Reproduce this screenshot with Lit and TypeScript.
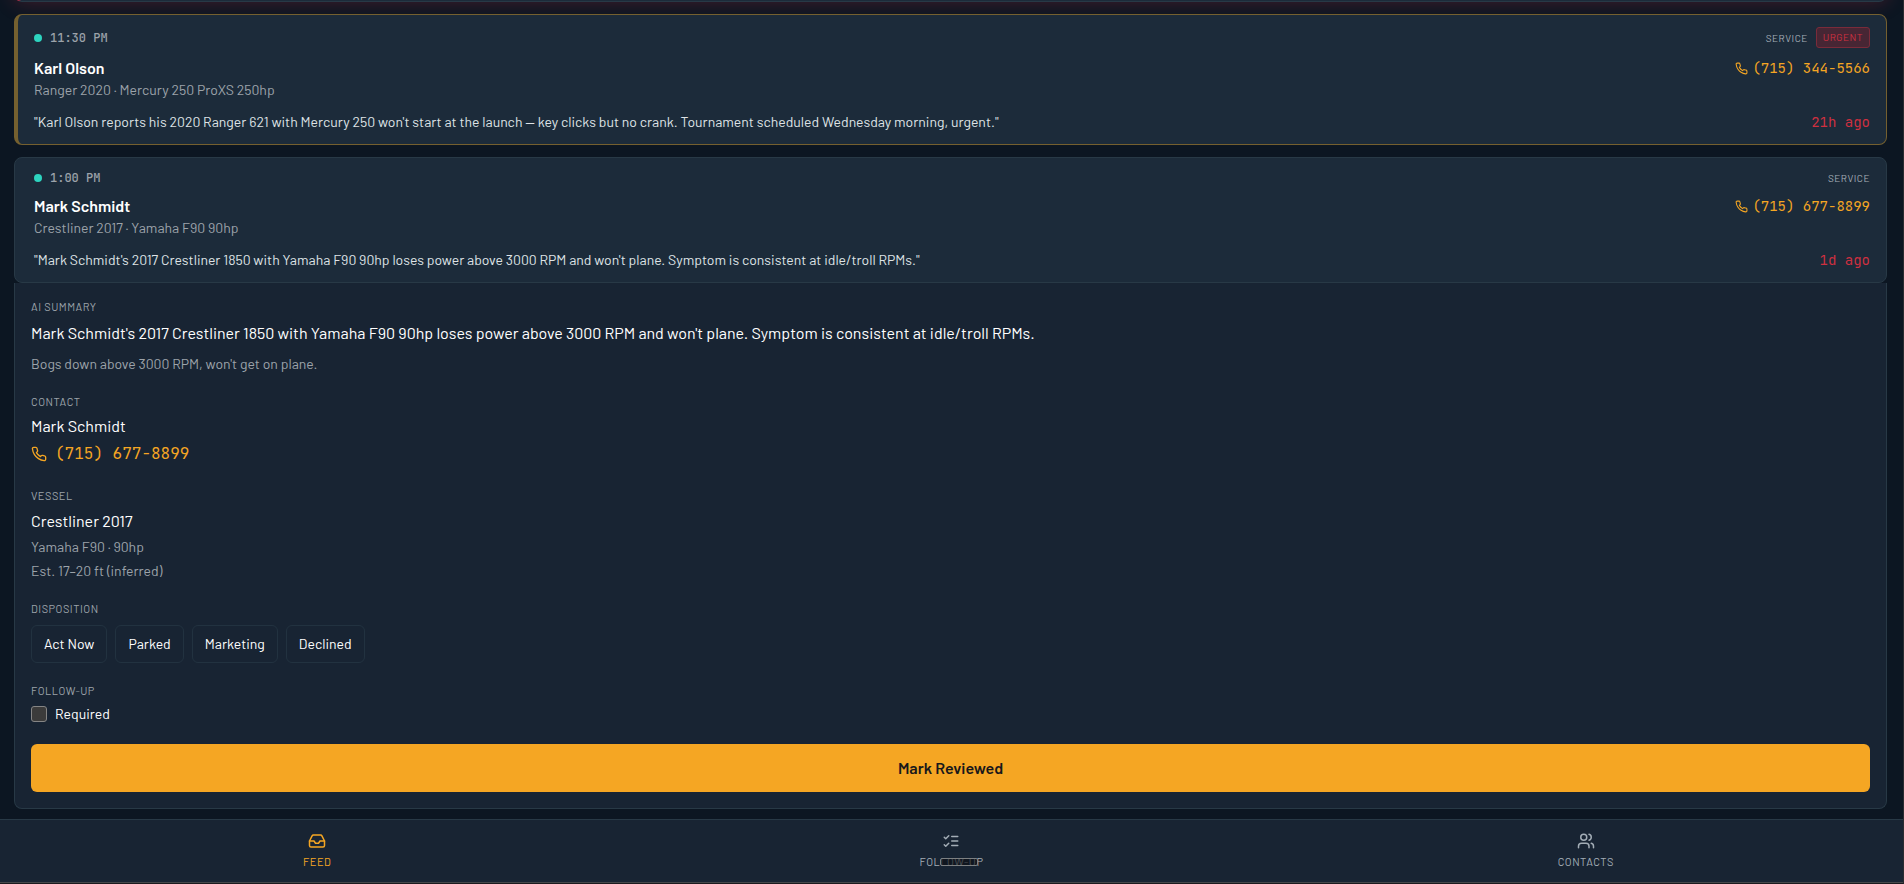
import { LitElement, html, css, svg } from "lit";
import { customElement, property, state } from "lit/decorators.js";
import { classMap } from "lit/directives/class-map.js";

interface Lead {
  time: string;
  name: string;
  unit: string;
  quote: string;
  phone: string;
  age: string;
  urgent: boolean;
}

const leads: Lead[] = [
  {
    time: "11:30 PM",
    name: "Karl Olson",
    unit: "Ranger 2020 · Mercury 250 ProXS 250hp",
    quote:
      "\"Karl Olson reports his 2020 Ranger 621 with Mercury 250 won't start at the launch — key clicks but no crank. Tournament scheduled Wednesday morning, urgent.\"",
    phone: "(715) 344-5566",
    age: "21h ago",
    urgent: true,
  },
  {
    time: "1:00 PM",
    name: "Mark Schmidt",
    unit: "Crestliner 2017 · Yamaha F90 90hp",
    quote:
      "\"Mark Schmidt's 2017 Crestliner 1850 with Yamaha F90 90hp loses power above 3000 RPM and won't plane. Symptom is consistent at idle/troll RPMs.\"",
    phone: "(715) 677-8899",
    age: "1d ago",
    urgent: false,
  },
];

const shapes = {
  phone: svg`<path d="M22 16.92v3a2 2 0 0 1-2.18 2 19.79 19.79 0 0 1-8.63-3.07 19.5 19.5 0 0 1-6-6 19.79 19.79 0 0 1-3.07-8.67A2 2 0 0 1 4.11 2h3a2 2 0 0 1 2 1.72 12.84 12.84 0 0 0 .7 2.81 2 2 0 0 1-.45 2.11L8.09 9.91a16 16 0 0 0 6 6l1.27-1.27a2 2 0 0 1 2.11-.45 12.84 12.84 0 0 0 2.81.7A2 2 0 0 1 22 16.92z"/>`,
  inbox: svg`<path d="M22 12h-6l-2 3h-4l-2-3H2"/><path d="M5.45 5.11 2 12v6a2 2 0 0 0 2 2h16a2 2 0 0 0 2-2v-6l-3.45-6.89A2 2 0 0 0 16.76 4H7.24a2 2 0 0 0-1.79 1.11z"/>`,
  checks: svg`<path d="m3 17 2 2 4-4"/><path d="m3 7 2 2 4-4"/><path d="M13 6h8"/><path d="M13 12h8"/><path d="M13 18h8"/>`,
  users: svg`<path d="M16 21v-2a4 4 0 0 0-4-4H6a4 4 0 0 0-4 4v2"/><circle cx="9" cy="7" r="4"/><path d="M22 21v-2a4 4 0 0 0-3-3.87"/><path d="M16 3.13a4 4 0 0 1 0 7.75"/>`,
};

const icon = (name: keyof typeof shapes, size: number) => html`<svg
  width=${size}
  height=${size}
  viewBox="0 0 24 24"
  fill="none"
  stroke="currentColor"
  stroke-width="2"
  stroke-linecap="round"
  stroke-linejoin="round"
  aria-hidden="true"
>
  ${shapes[name]}
</svg>`;

const base = css`
  :host {
    --sans: Barlow, Roboto, sans-serif;
    --mono: "JetBrains Mono", "DejaVu Sans Mono", monospace;
    --line: #283946;
    --muted: #9ca3aa;
    --amber: #f5a623;
    --red: #cf3040;
  }
  * {
    box-sizing: border-box;
  }
  p,
  h2,
  h3 {
    margin: 0;
    font-weight: 400;
  }
  svg {
    display: block;
    flex: none;
  }
  .phone {
    display: flex;
    align-items: center;
    gap: 4px;
    font: 14px/20px var(--mono);
    color: var(--amber);
    text-decoration: none;
  }
`;

@customElement("lead-card")
export class LeadCard extends LitElement {
  static styles = [
    base,
    css`
      :host {
        display: block;
      }
      .card {
        padding: 12px 16px 12px 19px;
        border: 1px solid var(--line);
        border-radius: 8px;
        background: #1c2b3a;
      }
      .urgent {
        padding-left: 16px;
        border-color: #75602f;
        border-left-width: 4px;
      }
      .row {
        display: flex;
        justify-content: space-between;
        align-items: center;
        gap: 16px;
      }
      .meta {
        display: flex;
        align-items: center;
        gap: 8px;
      }
      .dot {
        width: 8px;
        height: 8px;
        border-radius: 50%;
        background: #2dd4bf;
      }
      .time {
        font: 500 12px/16px var(--mono);
        color: var(--muted);
      }
      .kind {
        font-size: 10px;
        line-height: 16px;
        letter-spacing: 0.5px;
        color: #a3adb6;
      }
      .tag {
        padding: 2px 6px;
        border: 1px solid #7a2b3a;
        border-radius: 3px;
        background: #472634;
        font-size: 10px;
        line-height: 15px;
        letter-spacing: 0.5px;
        color: var(--red);
      }
      .who {
        margin-top: 8px;
      }
      .name {
        font-size: 16px;
        line-height: 24px;
        font-weight: 600;
        color: #fff;
      }
      .unit {
        font-size: 14px;
        line-height: 20px;
        color: var(--muted);
      }
      .foot {
        margin-top: 12px;
      }
      .quote {
        font-size: 14px;
        line-height: 20px;
        color: #dfe3e6;
      }
      .age {
        font: 14px/20px var(--mono);
        white-space: nowrap;
        color: var(--red);
      }
    `,
  ];

  @property({ attribute: false }) lead!: Lead;

  render() {
    const l = this.lead;
    return html`<article class=${classMap({ card: true, urgent: l.urgent })}>
      <div class="row">
        <div class="meta"><span class="dot"></span><span class="time">${l.time}</span></div>
        <div class="meta">
          <span class="kind">SERVICE</span>
          ${l.urgent ? html`<span class="tag">URGENT</span>` : null}
        </div>
      </div>
      <div class="row who">
        <h2 class="name">${l.name}</h2>
        <a class="phone" href="tel:${l.phone}">${icon("phone", 13)}${l.phone}</a>
      </div>
      <p class="unit">${l.unit}</p>
      <div class="row foot">
        <p class="quote">${l.quote}</p>
        <span class="age">${l.age}</span>
      </div>
    </article>`;
  }
}

@customElement("lead-detail")
export class LeadDetail extends LitElement {
  static styles = [
    base,
    css`
      :host {
        display: block;
      }
      .panel {
        display: flex;
        flex-direction: column;
        gap: 20px;
        padding: 16px;
        border: 1px solid var(--line);
        border-top: 0;
        border-radius: 0 0 8px 8px;
        background: #182433;
        color: #fff;
      }
      .block {
        display: flex;
        flex-direction: column;
        align-items: flex-start;
        gap: 4px;
      }
      .summary {
        gap: 6px;
      }
      .vessel .label {
        padding-bottom: 1px;
      }
      .choices {
        gap: 8px;
      }
      .label {
        font-size: 11px;
        line-height: 16px;
        letter-spacing: 0.5px;
        color: var(--muted);
      }
      .main {
        font-size: 16px;
        line-height: 24px;
      }
      .sub {
        font-size: 14px;
        line-height: 20px;
        color: var(--muted);
      }
      .summary .sub {
        padding-top: 3px;
      }
      .phone {
        gap: 8px;
        padding-bottom: 2px;
        font-size: 16px;
        line-height: 24px;
      }
      .chips {
        display: flex;
        flex-wrap: wrap;
        gap: 8px;
      }
      .chip {
        height: 38px;
        padding: 0 12px;
        border: 1px solid #223240;
        border-radius: 6px;
        background: none;
        font: 14px/20px var(--sans);
        color: #fff;
      }
      .check {
        display: flex;
        align-items: center;
        gap: 8px;
        font-size: 14px;
        line-height: 21px;
      }
      .box {
        appearance: none;
        width: 16px;
        height: 16px;
        margin: 0;
        border: 1px solid #858585;
        border-radius: 3px;
        background: #3b3b3b;
      }
      .box:checked {
        background: var(--amber);
      }
      .submit {
        width: 100%;
        height: 48px;
        border: 0;
        border-radius: 6px;
        background: var(--amber);
        font: 600 16px/24px var(--sans);
        color: #18181b;
      }
    `,
  ];

  render() {
    return html`<section class="panel">
      <div class="block summary">
        <h3 class="label">AI SUMMARY</h3>
        <p class="main">
          Mark Schmidt's 2017 Crestliner 1850 with Yamaha F90 90hp loses power above 3000 RPM and won't plane. Symptom
          is consistent at idle/troll RPMs.
        </p>
        <p class="sub">Bogs down above 3000 RPM, won't get on plane.</p>
      </div>
      <div class="block">
        <h3 class="label">CONTACT</h3>
        <p class="main">Mark Schmidt</p>
        <a class="phone" href="tel:7156778899">${icon("phone", 16)}(715) 677-8899</a>
      </div>
      <div class="block vessel">
        <h3 class="label">VESSEL</h3>
        <p class="main">Crestliner 2017</p>
        <p class="sub">Yamaha F90 · 90hp</p>
        <p class="sub">Est. 17–20 ft (inferred)</p>
      </div>
      <div class="block choices">
        <h3 class="label">DISPOSITION</h3>
        <div class="chips">
          ${["Act Now", "Parked", "Marketing", "Declined"].map(
            (t) => html`<button class="chip" type="button">${t}</button>`,
          )}
        </div>
      </div>
      <div class="block">
        <h3 class="label">FOLLOW-UP</h3>
        <label class="check"><input class="box" type="checkbox" />Required</label>
      </div>
      <button class="submit" type="button">Mark Reviewed</button>
    </section>`;
  }
}

@customElement("app-root")
export class AppRoot extends LitElement {
  static styles = [
    base,
    css`
      :host {
        display: block;
        font-family: var(--sans);
      }
      .screen {
        display: flex;
        flex-direction: column;
        height: 100vh;
        overflow: hidden;
        border-right: 1px solid #2a2c30;
        border-bottom: 1px solid #1b1a1e;
        background: #0c1622;
      }
      .feed {
        flex: 1;
        min-height: 0;
        padding: 0 16px 10px 14px;
        overflow: hidden;
      }
      /* Tail of the urgent card that is scrolled out of view. */
      .previous {
        height: 60px;
        margin-top: -58px;
        border: 1px solid var(--line);
        border-left: 4px solid #a03048;
        border-radius: 8px;
        background: #1c2b3a;
        box-shadow: 0 0 20px rgba(201, 48, 63, 0.3);
      }
      lead-card {
        margin-top: 12px;
      }
      .tabs {
        display: grid;
        grid-template-columns: repeat(3, 1fr);
        flex: none;
        border-top: 1px solid var(--line);
        border-bottom: 1px solid #45474a;
        background: #182433;
      }
      .tab {
        display: flex;
        flex-direction: column;
        align-items: center;
        gap: 4px;
        padding: 12px 0;
        font-size: 11px;
        line-height: 16px;
        letter-spacing: 0.5px;
        color: #a3adb6;
        text-decoration: none;
      }
      .on {
        color: var(--amber);
      }
      .text {
        position: relative;
      }
      .ghost {
        position: absolute;
        top: 4px;
        left: 20px;
        width: 38px;
        height: 8px;
        border: 1px solid #7d8082;
        border-radius: 2px;
        background: rgba(12, 14, 18, 0.6);
      }
    `,
  ];

  @state() private tab = "FEED";

  render() {
    const tabs: [string, keyof typeof shapes][] = [
      ["FEED", "inbox"],
      ["FOLLOW-UP", "checks"],
      ["CONTACTS", "users"],
    ];
    return html`<div class="screen">
      <main class="feed">
        <div class="previous"></div>
        ${leads.map((l) => html`<lead-card .lead=${l}></lead-card>`)}
        <lead-detail></lead-detail>
      </main>
      <nav class="tabs">
        ${tabs.map(
          ([name, glyph]) => html`<a
            class=${classMap({ tab: true, on: this.tab === name })}
            href="#${name.toLowerCase()}"
            @click=${() => (this.tab = name)}
            >${icon(glyph, 18)}<span class="text"
              >${name}${name === "FOLLOW-UP" ? html`<span class="ghost"></span>` : null}</span
            ></a
          >`,
        )}
      </nav>
    </div>`;
  }
}
